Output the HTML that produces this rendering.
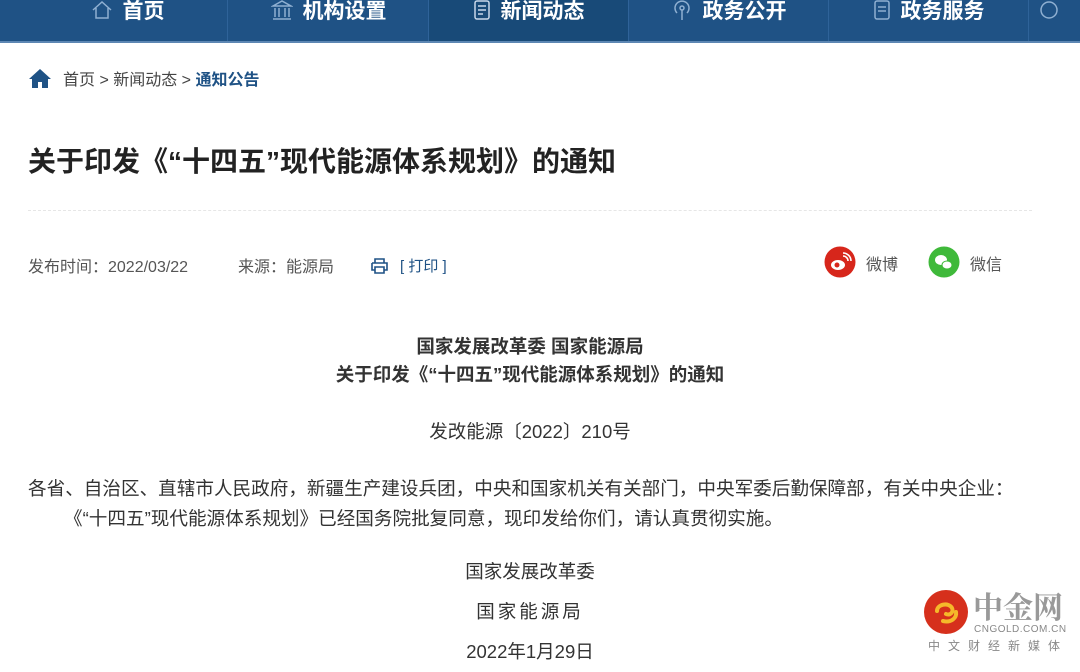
<!DOCTYPE html>
<html><head><meta charset="utf-8"><style>
*{margin:0;padding:0;box-sizing:border-box}
body{width:1080px;height:662px;overflow:hidden;background:#fff;font-family:"Liberation Sans","Noto Sans CJK SC",sans-serif;position:relative;color:#333}
.nav{position:absolute;left:0;top:0;width:1080px;height:43px;background:#1f5285;border-bottom:2px solid #5d87b3}
.tab{position:absolute;top:0;height:41px;width:200px;color:#fff;font-size:21px;font-weight:bold;line-height:20px;text-align:center;border-right:1px solid #2f6399}
.tab.act{background:#184a78}
.tab svg{vertical-align:-2px;margin-right:10px}
.a{position:absolute;white-space:nowrap}
</style></head><body>
<div class="nav">
<div class="tab" style="left:28px"><svg width="22" height="20" viewBox="0 0 22 20" fill="none" stroke="#8fb0d2" stroke-width="1.5"><path d="M2 10L11 2l9 8M5 8v10h12V8"/></svg>首页</div>
<div class="tab" style="left:229px"><svg width="22" height="20" viewBox="0 0 22 20" fill="none" stroke="#8fb0d2" stroke-width="1.5"><path d="M2 6L11 1l9 5zM4 8v9M8 8v9M14 8v9M18 8v9M2 19h18"/></svg>机构设置</div>
<div class="tab act" style="left:429px"><svg width="18" height="20" viewBox="0 0 18 20" fill="none" stroke="#c8d8ea" stroke-width="1.5"><rect x="2" y="1" width="14" height="18" rx="2"/><path d="M5 6h8M5 10h8M5 14h5"/></svg>新闻动态</div>
<div class="tab" style="left:629px"><svg width="22" height="20" viewBox="0 0 22 20" fill="none" stroke="#8fb0d2" stroke-width="1.5"><circle cx="11" cy="8" r="2"/><path d="M6 13a7 7 0 1 1 10 0M11 10v10"/></svg>政务公开</div>
<div class="tab" style="left:829px"><svg width="18" height="20" viewBox="0 0 18 20" fill="none" stroke="#8fb0d2" stroke-width="1.5"><rect x="2" y="1" width="14" height="18" rx="2"/><path d="M5 7h8M5 11h8"/></svg>政务服务</div>
<div class="tab" style="left:1029px;width:60px;text-align:left;padding-left:10px"><svg width="20" height="20" viewBox="0 0 20 20" fill="none" stroke="#8fb0d2" stroke-width="1.5"><circle cx="10" cy="10" r="8"/></svg></div>
</div>
<svg class="a" style="left:29px;top:68px" width="22" height="20" viewBox="0 0 22 20"><path d="M11 1L0 11h3v9h6v-6h4v6h6v-9h3z" fill="#1f5285"/></svg>
<div class="a" style="left:63px;top:66px;font-size:16px;color:#444">首页 &gt; 新闻动态 &gt; <b style="color:#1f5285">通知公告</b></div>
<div class="a" style="left:28px;top:140px;font-size:28px;font-weight:bold;color:#222">关于印发《“十四五”现代能源体系规划》的通知</div>
<div class="a" style="left:28px;top:210px;width:1004px;border-top:1px dashed #e6e6e6"></div>
<div class="a" style="left:28px;top:253px;font-size:16px;color:#555">发布时间：2022/03/22</div>
<div class="a" style="left:238px;top:253px;font-size:16px;color:#555">来源：能源局</div>
<svg class="a" style="left:371px;top:258px" width="17" height="16" viewBox="0 0 17 16" fill="none" stroke="#1f5285" stroke-width="1.6"><path d="M4 5V1h9v4M1 5h15v7h-3M4 12H1V5M4 9h9v6H4z"/></svg>
<div class="a" style="left:400px;top:255px;font-size:15px;color:#1f5285">[ 打印 ]</div>
<svg class="a" style="left:824px;top:246px" width="32" height="32" viewBox="0 0 32 32"><circle cx="16" cy="16" r="15.5" fill="#d7261b"/><ellipse cx="14" cy="19" rx="7" ry="5" fill="#fff"/><circle cx="13" cy="19" r="2.5" fill="#d7261b"/><path d="M19 10a5 5 0 0 1 5 5M19 7a8 8 0 0 1 8 8" stroke="#fff" stroke-width="1.6" fill="none"/></svg>
<div class="a" style="left:866px;top:251px;font-size:16px;color:#555">微博</div>
<svg class="a" style="left:928px;top:246px" width="32" height="32" viewBox="0 0 32 32"><circle cx="16" cy="16" r="15.5" fill="#3fb93a"/><ellipse cx="13" cy="14" rx="6" ry="5" fill="#fff"/><ellipse cx="19" cy="19" rx="5" ry="4" fill="#fff" stroke="#3fb93a"/></svg>
<div class="a" style="left:970px;top:251px;font-size:16px;color:#555">微信</div>
<div class="a" style="left:0;width:1060px;top:333px;text-align:center;font-size:18.5px;font-weight:bold;line-height:28px;color:#333">国家发展改革委 国家能源局<br>关于印发《“十四五”现代能源体系规划》的通知</div>
<div class="a" style="left:0;width:1060px;top:418px;text-align:center;font-size:18.5px;color:#333">发改能源〔2022〕210号</div>
<div class="a" style="left:28px;top:474px;font-size:18.6px;line-height:30px;color:#333">各省、自治区、直辖市人民政府，新疆生产建设兵团，中央和国家机关有关部门，中央军委后勤保障部，有关中央企业：<br><span style="padding-left:36px"></span>《“十四五”现代能源体系规划》已经国务院批复同意，现印发给你们，请认真贯彻实施。</div>
<div class="a" style="left:0;width:1060px;top:552px;text-align:center;font-size:18.5px;line-height:40px;color:#333">国家发展改革委<br><span style="letter-spacing:3px">国家能源局</span><br>2022年1月29日</div>
<svg class="a" style="left:923px;top:589px" width="46" height="46" viewBox="0 0 46 46"><circle cx="23" cy="23" r="22" fill="#d6301c"/><path d="M14 22c0-7 12-9 15-3 2 4-2 8-6 6M20 32c8 2 14-3 13-9" stroke="#f5b92a" stroke-width="4" fill="none" stroke-linecap="round"/></svg>
<div class="a" style="left:973px;top:588px;font-size:30px;font-weight:bold;color:#999;font-family:'Noto Serif CJK SC',serif;line-height:34px">中金网</div>
<div class="a" style="left:974px;top:624px;font-size:10px;color:#888;letter-spacing:0.5px">CNGOLD.COM.CN</div>
<div class="a" style="left:928px;top:637px;font-size:12px;color:#888;letter-spacing:8px">中文财经新媒体</div>
</body></html>
